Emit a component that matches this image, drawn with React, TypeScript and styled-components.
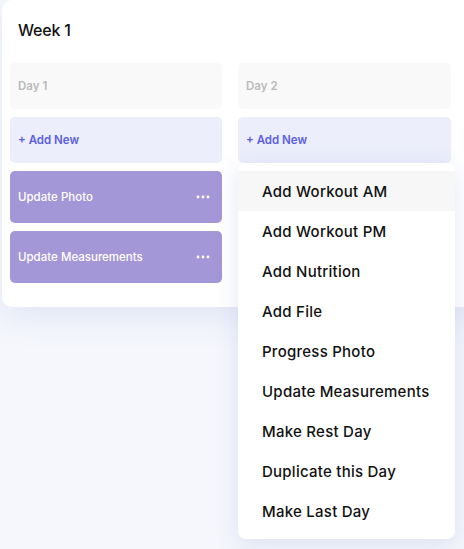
import { FC } from 'react';
import styled, { createGlobalStyle } from 'styled-components';

const GlobalStyle = createGlobalStyle`
  html, body {
    margin: 0;
    padding: 0;
    overflow: hidden;
    background: #f5f7fc;
    font-family: Inter, 'Liberation Sans', sans-serif;
  }
`;

type Task = { id: string; title: string };

const day1Tasks: Task[] = [
  { id: 'photo', title: 'Update Photo' },
  { id: 'measure', title: 'Update Measurements' },
];

const menuItems = [
  'Add Workout AM',
  'Add Workout PM',
  'Add Nutrition',
  'Add File',
  'Progress Photo',
  'Update Measurements',
  'Make Rest Day',
  'Duplicate this Day',
  'Make Last Day',
];

const Dots: FC = () => (
  <svg width="14" height="4" viewBox="0 0 14 4" fill="#fff">
    <circle cx="2" cy="2" r="1.4" />
    <circle cx="7" cy="2" r="1.4" />
    <circle cx="12" cy="2" r="1.4" />
  </svg>
);

const DayColumn: FC<{ label: string; tasks: Task[]; menuOpen?: boolean }> = ({
  label,
  tasks,
  menuOpen,
}) => (
  <Column>
    <DayHeader>{label}</DayHeader>
    <AddNew>+ Add New</AddNew>
    {tasks.map((t) => (
      <TaskCard key={t.id}>
        <span>{t.title}</span>
        <Dots />
      </TaskCard>
    ))}
    {menuOpen && (
      <Menu>
        {menuItems.map((item, i) => (
          <MenuItem key={item} $active={i === 0}>
            {item}
          </MenuItem>
        ))}
      </Menu>
    )}
  </Column>
);

export default function App() {
  return (
    <>
      <GlobalStyle />
      <Page>
        <WeekCard>
          <Title>Week 1</Title>
          <Days>
            <DayColumn label="Day 1" tasks={day1Tasks} />
            <DayColumn label="Day 2" tasks={[]} menuOpen />
          </Days>
        </WeekCard>
      </Page>
    </>
  );
}

const Page = styled.div`
  width: 464px;
  height: 549px;
  padding-left: 2px;
  box-sizing: border-box;
`;

const WeekCard = styled.section`
  width: 480px;
  box-sizing: border-box;
  padding: 20px 8px 24px;
  background: #fff;
  border-radius: 10px;
  box-shadow: 0 12px 30px rgba(110, 130, 210, 0.13);
`;

const Title = styled.h1`
  margin: 0 0 23px 8px;
  font-size: 16px;
  line-height: 20px;
  font-weight: 500;
  letter-spacing: -0.2px;
  color: #111;
`;

const Days = styled.div`
  display: grid;
  grid-template-columns: 212px 213px;
  column-gap: 16px;
  align-items: start;
`;

const Column = styled.div`
  position: relative;
  display: flex;
  flex-direction: column;
  gap: 8px;
`;

const Slot = styled.div`
  display: flex;
  align-items: center;
  padding: 0 8px;
  border-radius: 5px;
  font-size: 11.5px;
  font-weight: 600;
`;

const DayHeader = styled(Slot)`
  height: 46px;
  background: #f9f9f9;
  color: #b9b9b9;
`;

const AddNew = styled(Slot)`
  height: 46px;
  background: #eceefb;
  color: #5b5fe3;
`;

const TaskCard = styled(Slot)`
  height: 52px;
  justify-content: space-between;
  padding-right: 12px;
  background: #a397d7;
  color: #fff;
  font-weight: 500;
`;

const Menu = styled.ul`
  position: absolute;
  top: 100px;
  left: 0;
  width: 217px;
  margin: 0;
  padding: 8px 0;
  list-style: none;
  background: #fff;
  border-radius: 8px;
  box-shadow: 0 6px 24px rgba(90, 110, 190, 0.16);
  z-index: 10;
`;

const MenuItem = styled.li<{ $active?: boolean }>`
  height: 40px;
  display: flex;
  align-items: center;
  padding-left: 24px;
  background: ${({ $active }) => ($active ? '#f7f7f7' : 'transparent')};
  color: #111;
  font-size: 15px;
  font-weight: 500;
  letter-spacing: 0.25px;
`;
